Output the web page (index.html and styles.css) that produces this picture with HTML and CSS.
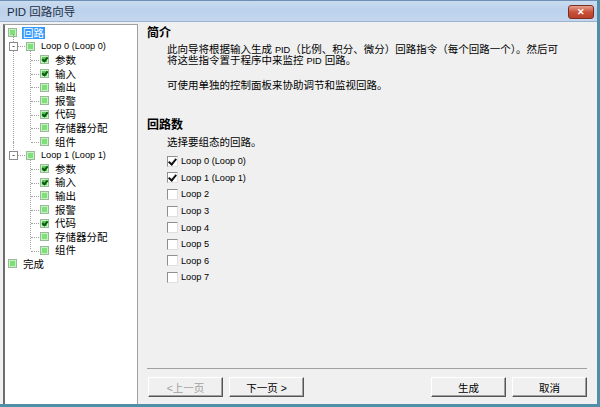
FILE: index.html
```html
<!DOCTYPE html>
<html lang="zh">
<head>
  <meta charset="UTF-8">
  <title>PID 回路向导</title>
  <link rel="stylesheet" href="styles.css">
</head>
<body>
  <div class="window">
    <div class="titlebar">
      <span class="title">PID 回路向导</span>
      <span class="close-btn">&#x2715;</span>
    </div>

    <div class="main">
      <!-- left tree -->
      <div class="tree">
        <div class="row root"><span class="box"></span><span class="label selected">回路</span></div>

        <div class="branch">
          <div class="row loop"><span class="toggle">-</span><span class="box"></span><span class="label lat">Loop 0 (Loop 0)</span></div>
          <div class="children">
            <div class="row leaf"><span class="box checked"></span><span class="label">参数</span></div>
            <div class="row leaf"><span class="box checked"></span><span class="label">输入</span></div>
            <div class="row leaf"><span class="box"></span><span class="label">输出</span></div>
            <div class="row leaf"><span class="box"></span><span class="label">报警</span></div>
            <div class="row leaf"><span class="box checked"></span><span class="label">代码</span></div>
            <div class="row leaf"><span class="box"></span><span class="label">存储器分配</span></div>
            <div class="row leaf last"><span class="box"></span><span class="label">组件</span></div>
          </div>
        </div>

        <div class="branch last-branch">
          <div class="row loop"><span class="toggle">-</span><span class="box"></span><span class="label lat">Loop 1 (Loop 1)</span></div>
          <div class="children">
            <div class="row leaf"><span class="box checked"></span><span class="label">参数</span></div>
            <div class="row leaf"><span class="box checked"></span><span class="label">输入</span></div>
            <div class="row leaf"><span class="box"></span><span class="label">输出</span></div>
            <div class="row leaf"><span class="box"></span><span class="label">报警</span></div>
            <div class="row leaf"><span class="box checked"></span><span class="label">代码</span></div>
            <div class="row leaf"><span class="box"></span><span class="label">存储器分配</span></div>
            <div class="row leaf last"><span class="box"></span><span class="label">组件</span></div>
          </div>
        </div>

        <div class="row root"><span class="box"></span><span class="label">完成</span></div>
      </div>

      <!-- right panel -->
      <div class="panel">
        <div class="content">
          <h2>简介</h2>
          <p class="intro">此向导将根据输入生成 <span class="lat">PID</span>（比例、积分、微分）回路指令（每个回路一个）。然后可<br>将这些指令置于程序中来监控 <span class="lat">PID</span> 回路。</p>
          <p class="intro">可使用单独的控制面板来协助调节和监视回路。</p>

          <h2 class="loops-title">回路数</h2>
          <p class="hint">选择要组态的回路。</p>
          <ul class="loop-list">
            <li><span class="check on"></span><span class="lat">Loop 0 (Loop 0)</span></li>
            <li><span class="check on"></span><span class="lat">Loop 1 (Loop 1)</span></li>
            <li><span class="check"></span><span class="lat">Loop 2</span></li>
            <li><span class="check"></span><span class="lat">Loop 3</span></li>
            <li><span class="check"></span><span class="lat">Loop 4</span></li>
            <li><span class="check"></span><span class="lat">Loop 5</span></li>
            <li><span class="check"></span><span class="lat">Loop 6</span></li>
            <li><span class="check"></span><span class="lat">Loop 7</span></li>
          </ul>
        </div>

        <div class="footer">
          <button class="btn" disabled>&lt;上一页</button>
          <button class="btn">下一页 &gt;</button>
          <span class="spacer"></span>
          <button class="btn">生成</button>
          <button class="btn">取消</button>
        </div>
      </div>
    </div>
  </div>
</body>
</html>
```

FILE: styles.css
```css
html, body {
  margin: 0;
  padding: 0;
}
body {
  font-family: "Liberation Sans", "Noto Sans CJK SC", sans-serif;
  font-size: 10.5px;
  color: #000;
  background: #f0f0f0;
}
.lat {
  font-size: 9.2px;
}
.window {
  width: 600px;
  height: 407px;
  box-sizing: border-box;
  display: flex;
  flex-direction: column;
  background: #f0f0f0;
  border-right: 3px solid #4f8fa8;
  border-bottom: 3px solid #4f8fa8;
  overflow: hidden;
}
.titlebar {
  height: 22px;
  flex: none;
  display: flex;
  align-items: center;
  justify-content: space-between;
  padding: 0 3px 0 7px;
  background: linear-gradient(#c9dbef, #bcd2ec 50%, #c4d7ee);
  border-top: 1px solid #6d8fb4;
  border-bottom: 1px solid #9bb3cf;
  box-sizing: border-box;
}
.title {
  font-size: 11.5px;
  color: #1e2f44;
}
.close-btn {
  width: 26px;
  height: 14px;
  margin-top: 2px;
  border: 1px solid #7a2f22;
  border-radius: 3px;
  background: linear-gradient(#e6a08e, #c9513a 50%, #b8402a);
  color: #fff;
  font-size: 9px;
  font-weight: bold;
  line-height: 12px;
  text-align: center;
  box-sizing: border-box;
}

.main {
  flex: 1;
  display: flex;
  padding: 2px 0 0 3px;
  min-height: 0;
}

/* tree */
.tree {
  width: 135px;
  flex: none;
  background: #fff;
  border-left: 2px solid #6e6e6e;
  border-top: 1px solid #a0a0a0;
  border-right: 1px solid #a0a0a0;
  box-sizing: border-box;
  padding-top: 1px;
}
.row {
  height: 13.6px;
  display: flex;
  align-items: center;
  position: relative;
  white-space: nowrap;
}
.root {
  padding-left: 3px;
}
.loop {
  padding-left: 4px;
}
.leaf {
  padding-left: 35px;
}
.box {
  width: 9px;
  height: 9px;
  flex: none;
  background: #7fe07a;
  border: 1px solid #9ab89a;
  box-sizing: border-box;
  box-shadow: inset 0 0 0 1px #c4f2c0;
  position: relative;
}
.box.checked {
  background: #59c958;
}
.box.checked::after {
  content: "";
  position: absolute;
  left: 2px;
  top: 0;
  width: 2px;
  height: 4px;
  border: solid #0c5a10;
  border-width: 0 2px 2px 0;
  transform: rotate(40deg);
}
.label {
  margin-left: 5px;
  padding: 0 1px;
  line-height: 12px;
}
.label.selected {
  background: #3399ff;
  color: #fff;
}
.toggle {
  width: 9px;
  height: 9px;
  flex: none;
  border: 1px solid #8c8c8c;
  box-sizing: border-box;
  background: #fff;
  font-size: 9px;
  line-height: 6px;
  text-align: center;
  color: #333;
  margin-right: 8px;
  position: relative;
}
.toggle::after {
  content: "";
  position: absolute;
  left: 8px;
  top: 3px;
  width: 7px;
  border-top: 1px dotted #a0a0a0;
}
.branch {
  position: relative;
}
.branch::before {
  content: "";
  position: absolute;
  left: 8px;
  top: -6px;
  bottom: 0;
  border-left: 1px dotted #a0a0a0;
}
.branch.last-branch::before {
  bottom: auto;
  height: 8px;
}
.children {
  position: relative;
}
.children::before {
  content: "";
  position: absolute;
  left: 25px;
  top: -3px;
  height: calc(100% - 5px);
  border-left: 1px dotted #a0a0a0;
}
.leaf::before {
  content: "";
  position: absolute;
  left: 26px;
  top: 7px;
  width: 8px;
  border-top: 1px dotted #a0a0a0;
}

/* right panel */
.panel {
  flex: 1;
  display: flex;
  flex-direction: column;
  padding: 0 10px 0 9px;
}
.content {
  flex: 1;
}
h2 {
  font-size: 12px;
  font-weight: bold;
  margin: 2px 0 4px 0;
  line-height: 14px;
}
.intro {
  margin: 0 0 14px 20px;
  line-height: 11px;
}
.intro .lat {
  line-height: 0;
}
.loops-title {
  margin-top: 27px;
  margin-bottom: 3px;
}
.hint {
  margin: 0 0 4px 20px;
  line-height: 14px;
}
.loop-list {
  list-style: none;
  margin: 0;
  padding: 0 0 0 20px;
}
.loop-list li {
  height: 16.6px;
  display: flex;
  align-items: center;
}
.check {
  width: 11px;
  height: 11px;
  flex: none;
  box-sizing: border-box;
  border: 1px solid #8f8f8f;
  border-right-color: #e0e0e0;
  border-bottom-color: #e0e0e0;
  background: #fff;
  margin-right: 3px;
  position: relative;
}
.check.on::after {
  content: "";
  position: absolute;
  left: 2px;
  top: 0;
  width: 3px;
  height: 6px;
  border: solid #111;
  border-width: 0 2px 2px 0;
  transform: rotate(40deg);
}

.footer {
  flex: none;
  height: 36px;
  box-sizing: border-box;
  border-top: 1px solid #a0a0a0;
  display: flex;
  align-items: flex-start;
  gap: 6px;
  padding: 8px 0 0 1px;
}
.spacer {
  flex: 1;
}
.btn {
  width: 75px;
  height: 20px;
  font-family: "Liberation Sans", "Noto Sans CJK SC", sans-serif;
  font-size: 10.5px;
  background: #f0f0f0;
  border: 1px solid;
  border-color: #fff #555 #555 #fff;
  box-shadow: inset -1px -1px 0 #a0a0a0;
  padding: 0;
  color: #000;
}
.btn:disabled {
  color: #a0a0a0;
}
```
